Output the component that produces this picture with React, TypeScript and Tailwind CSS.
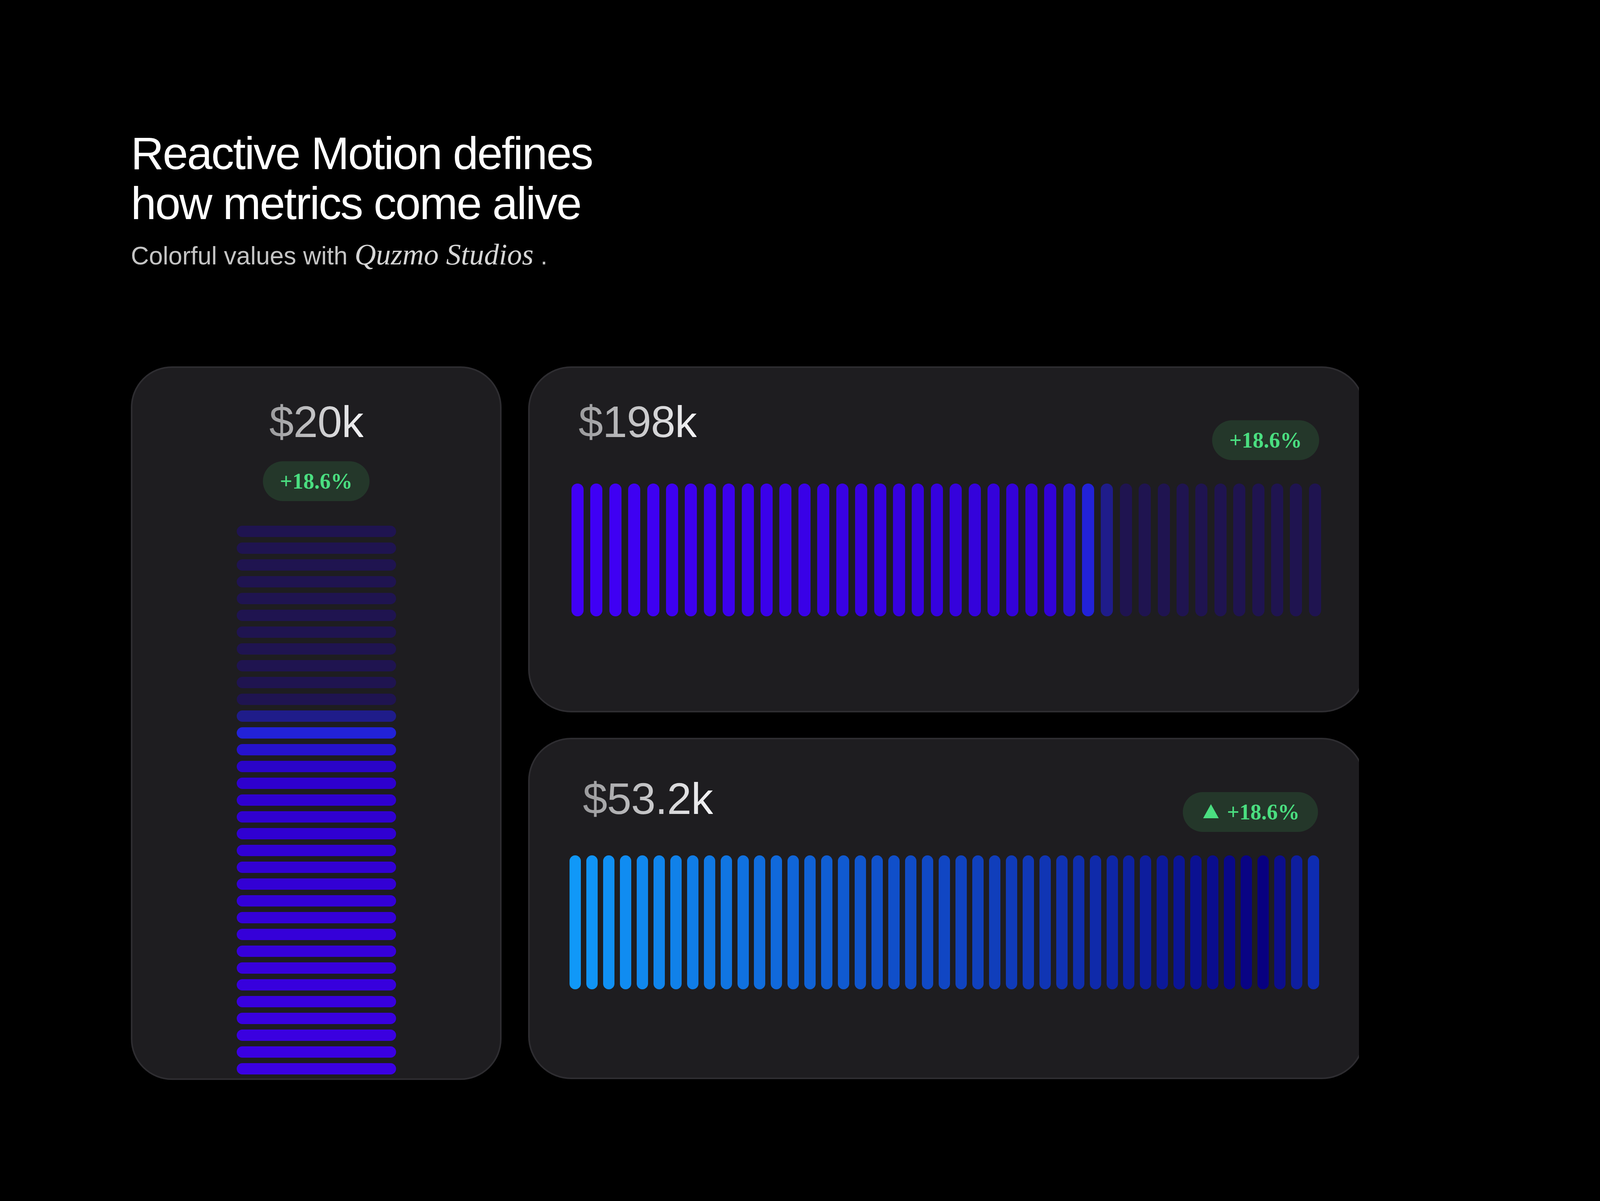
type RGB = [number, number, number];

const mix = (a: RGB, b: RGB, t: number): string =>
  `rgb(${a.map((v, k) => Math.round(v + (b[k] - v) * t)).join(",")})`;

// piecewise gradient through index stops
const ramp = (stops: [number, RGB][], i: number): string => {
  for (let s = 0; s < stops.length - 1; s++) {
    const [i0, c0] = stops[s];
    const [i1, c1] = stops[s + 1];
    if (i >= i0 && i <= i1) return mix(c0, c1, (i - i0) / (i1 - i0));
  }
  return mix(stops[stops.length - 1][1], stops[stops.length - 1][1], 0);
};

const DARK: RGB = [31, 20, 80];

const topColors = Array.from({ length: 40 }, (_, i) => {
  if (i <= 25) return mix([64, 0, 246], [50, 2, 214], i / 25);
  if (i === 26) return "rgb(42,16,207)";
  if (i === 27) return "rgb(34,34,216)";
  if (i === 28) return "rgb(31,28,138)";
  return mix(DARK, DARK, 0);
});

const sideColors = Array.from({ length: 34 }, (_, j) => {
  if (j <= 10) return mix(DARK, DARK, 0);
  if (j === 11) return "rgb(31,28,138)";
  if (j === 12) return "rgb(34,34,216)";
  if (j === 13) return "rgb(38,18,204)";
  if (j === 14) return "rgb(42,4,200)";
  return mix([46, 0, 206], [60, 0, 228], (j - 15) / 18);
});

const blueColors = Array.from({ length: 45 }, (_, i) =>
  ramp(
    [
      [0, [16, 152, 248]],
      [18, [16, 82, 204]],
      [29, [16, 50, 178]],
      [41, [8, 0, 128]],
      [42, [12, 14, 140]],
      [43, [14, 30, 158]],
      [44, [14, 44, 178]],
    ],
    i
  )
);

function Amount({ value, className = "" }: { value: string; className?: string }) {
  return (
    <span
      className={`bg-linear-to-r from-[#9a9a9c] to-[#f4f4f6] bg-clip-text text-[113px] leading-none tracking-[-0.01em] text-transparent ${className}`}
    >
      {value}
    </span>
  );
}

function Badge({ arrow = false, className = "" }: { arrow?: boolean; className?: string }) {
  return (
    <div
      className={`flex h-[102px] shrink-0 items-center rounded-full bg-[#24372a] ${
        arrow ? "gap-[21px] pl-[52px] pr-[47px]" : "px-[44px]"
      } ${className}`}
    >
      {arrow && (
        <svg width="40" height="36" viewBox="0 0 40 36" className="mb-[4px]">
          <polygon points="20,0 40,36 0,36" fill="#4ade80" />
        </svg>
      )}
      <span className="font-['Liberation_Serif',serif] text-[56px] font-bold leading-none text-[#4ade80]">
        +18.6%
      </span>
    </div>
  );
}

export default function App() {
  return (
    <div className="h-[3075px] w-[4100px] overflow-hidden bg-black font-['Liberation_Sans',Arial,sans-serif]">
      <div className="pl-[335px] pt-[329px]">
        {/* heading */}
        <h1 className="text-[117px] font-normal leading-[128px] tracking-[-0.025em] text-white">
          Reactive Motion defines
          <br />
          how metrics come alive
        </h1>
        <p className="mt-[26px] text-[64px] leading-[80px] text-[#c4c4c4]">
          Colorful values with{" "}
          <span className="font-['Liberation_Serif',serif] text-[76px] italic text-[#d6d6d6]">Quzmo Studios</span> .
        </p>

        {/* cards */}
        <div className="mt-[243px] flex items-start">
          {/* vertical card */}
          <div className="flex h-[1827px] w-[949px] shrink-0 flex-col items-center overflow-hidden rounded-[105px] border-[4px] border-[#2e2d31] bg-[#1e1d20] pt-[82px]">
            <Amount value="$20k" />
            <Badge className="mt-[44px]" />
            <div className="mt-[63px] flex w-[408px] shrink-0 flex-col gap-[14px]">
              {sideColors.map((c, j) => (
                <div key={j} className="h-[29px] shrink-0 rounded-full" style={{ background: c }} />
              ))}
            </div>
          </div>

          {/* right column, clipped on the right */}
          <div className="ml-[68px] flex w-[2127px] shrink-0 flex-col gap-[65px] overflow-hidden">
            <div className="h-[886px] w-[2142px] shrink-0 rounded-[110px] border-[4px] border-[#2e2d31] bg-[#1e1d20] pl-[107px] pt-[82px]">
              <div className="flex h-[154px] w-[1919px] items-start justify-between">
                <Amount value="$198k" className="ml-[18px]" />
                <Badge className="mr-[5px] mt-[52px]" />
              </div>
              <div className="mt-[60px] flex h-[340px] w-[1919px] justify-between">
                {topColors.map((c, i) => (
                  <div key={i} className="h-full w-[31px] rounded-full" style={{ background: c }} />
                ))}
              </div>
            </div>

            <div className="h-[874px] w-[2142px] shrink-0 rounded-[110px] border-[4px] border-[#2e2d31] bg-[#1e1d20] pl-[102px] pt-[96px]">
              <div className="flex h-[141px] w-[1919px] items-start justify-between">
                <Amount value="$53.2k" className="ml-[34px]" />
                <Badge arrow className="mr-[3px] mt-[39px]" />
              </div>
              <div className="mt-[60px] flex h-[343px] w-[1919px] justify-between">
                {blueColors.map((c, i) => (
                  <div key={i} className="h-full w-[29px] rounded-full" style={{ background: c }} />
                ))}
              </div>
            </div>
          </div>
        </div>
      </div>
    </div>
  );
}
